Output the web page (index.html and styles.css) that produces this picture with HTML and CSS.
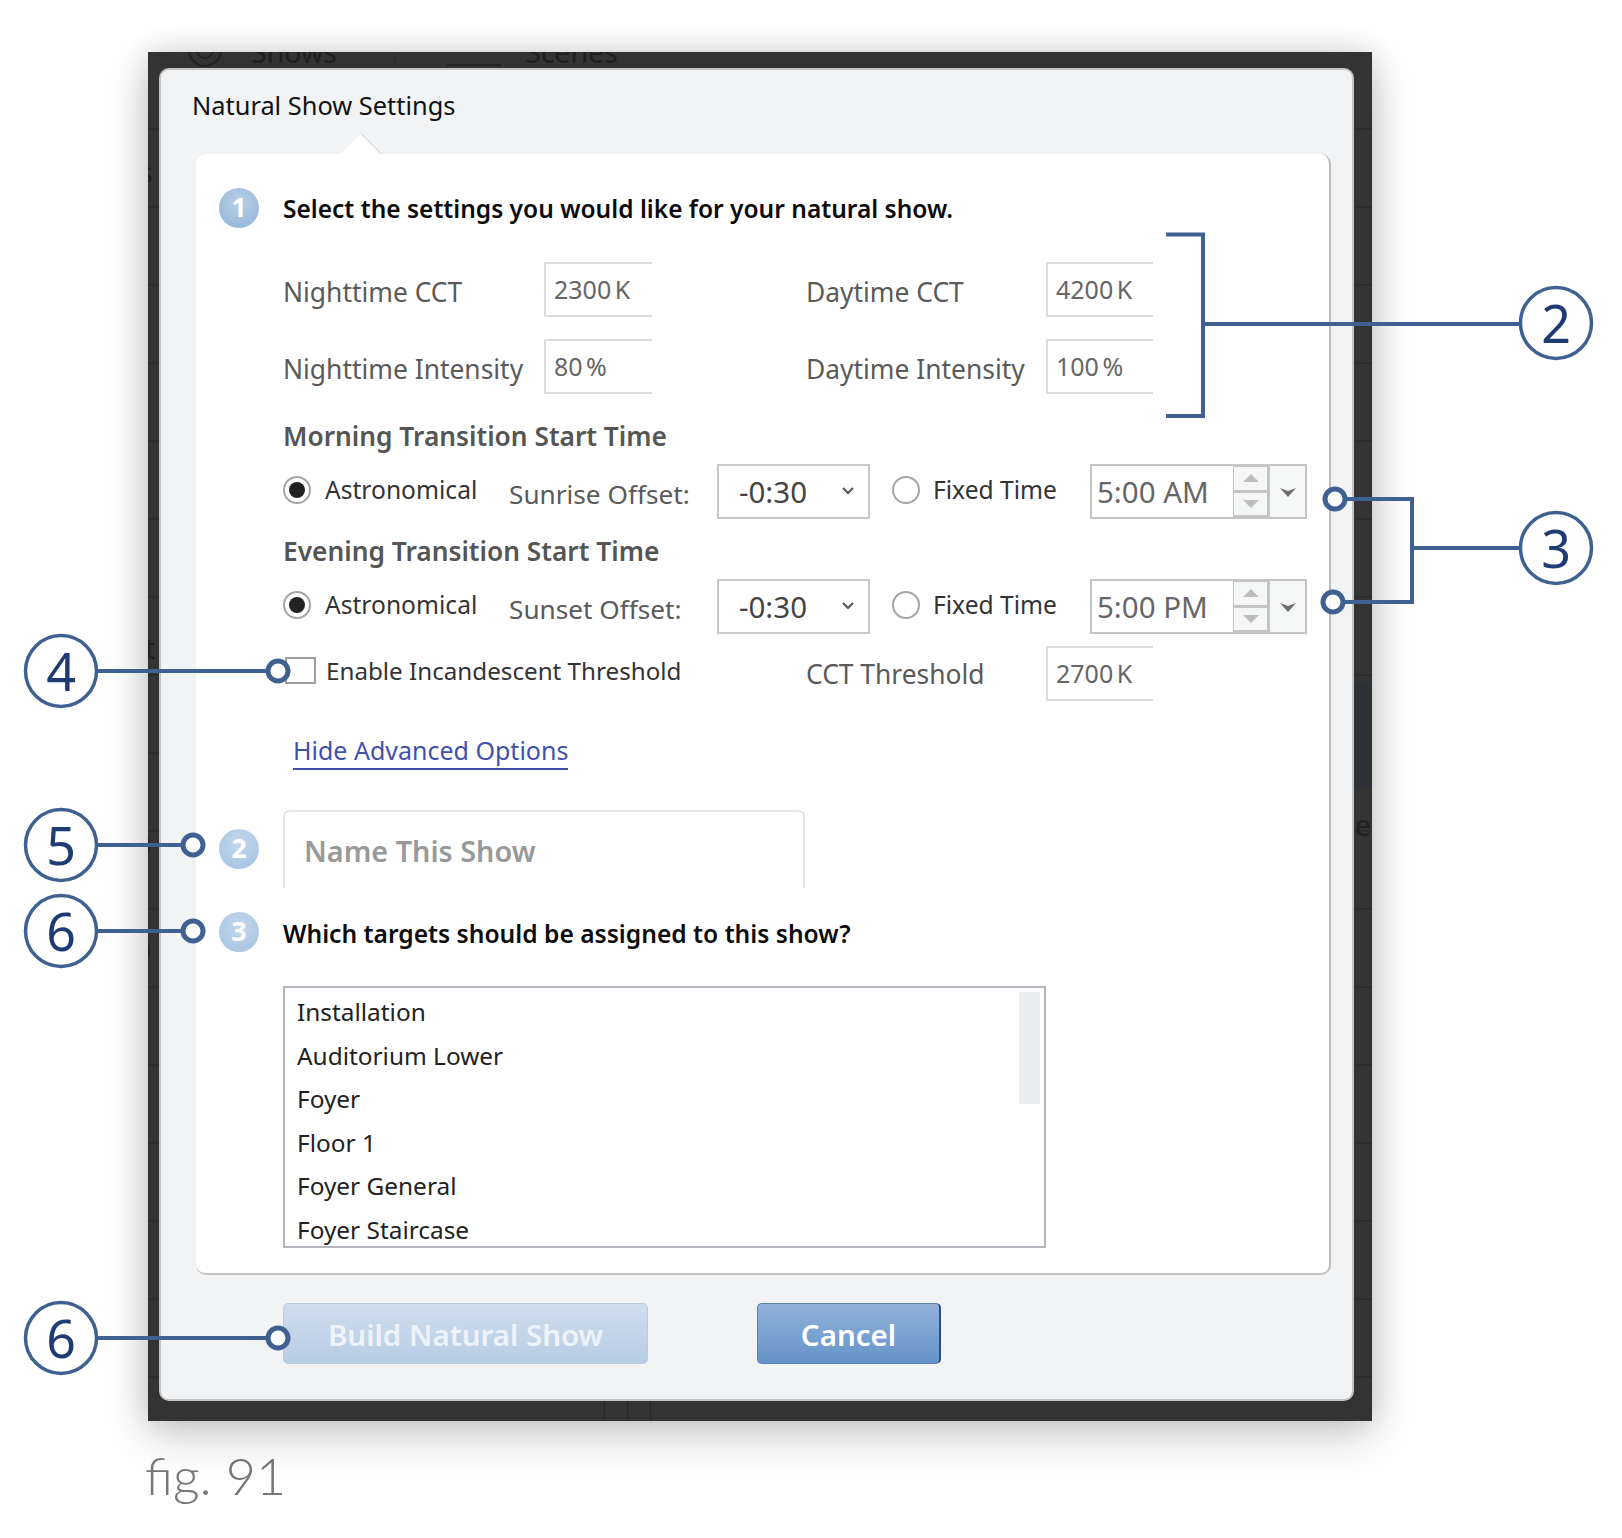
FILE: index.html
```html
<!DOCTYPE html>
<html lang="en">
<head>
<meta charset="utf-8">
<title>Natural Show Settings</title>
<link rel="stylesheet" href="styles.css">
</head>
<body>
<div class="page">
  <div class="frame">
    <div class="ghost">
      <svg class="ghost-icon" width="44" height="30" viewBox="0 0 44 30"><circle cx="22" cy="-2" r="16" fill="none" stroke="#222" stroke-width="2"/><circle cx="22" cy="-2" r="8" fill="none" stroke="#222" stroke-width="2"/></svg>
      <span class="ghost-text ghost-shows">Shows</span>
      <span class="ghost-text ghost-scenes">Scenes</span>
      <span class="ghost-sep"></span>
      <span class="ghost-dash"></span>
      <span class="ghost-band"></span>
      <span class="ghost-text ghost-s">s</span>
      <span class="ghost-text ghost-t">t</span>
      <span class="ghost-text ghost-o1">0</span>
      <span class="ghost-text ghost-o2">0</span>
      <span class="ghost-text ghost-e">e</span>
      <span class="ghost-v ghost-v1"></span>
      <span class="ghost-v ghost-v2"></span>
      <span class="ghost-v ghost-v3"></span>
    </div>
    <div class="dialog">
      <h1 class="dialog-title">Natural Show Settings</h1>
      <div class="panel">
        <span class="notch"></span>
        <div class="step step-first">
          <span class="badge">1</span>
          <h2 class="step-title">Select the settings you would like for your natural show.</h2>
        </div>
        <div class="body">
          <div class="fields">
            <span class="field-label">Nighttime CCT</span>
            <span class="num-input">2300 K</span>
            <span></span>
            <span class="field-label">Daytime CCT</span>
            <span class="num-input">4200 K</span>
            <span class="field-label">Nighttime Intensity</span>
            <span class="num-input">80 %</span>
            <span></span>
            <span class="field-label">Daytime Intensity</span>
            <span class="num-input">100 %</span>
          </div>

          <h3 class="sub-title sub-morning">Morning Transition Start Time</h3>
          <div class="time-row">
            <label class="radio-label"><span class="radio radio-on"></span>Astronomical</label>
            <span class="offset-label">Sunrise Offset:</span>
            <span class="select">-0:30
              <svg class="chev" width="14" height="10" viewBox="0 0 14 10"><path d="M2 2l5 5 5-5" fill="none" stroke="#555" stroke-width="2"/></svg>
            </span>
            <label class="radio-label radio-fixed"><span class="radio"></span>Fixed Time</label>
            <span class="spin">
              <span class="spin-value">5:00 AM</span>
              <span class="spin-btns">
                <span class="spin-btn"><svg width="18" height="10" viewBox="0 0 18 10"><path d="M1 9L9 1l8 8H1z" fill="#bdbdbd"/></svg></span>
                <span class="spin-btn"><svg width="18" height="10" viewBox="0 0 18 10"><path d="M1 1h16L9 9z" fill="#bdbdbd"/></svg></span>
              </span>
              <span class="spin-drop"><svg width="16" height="10" viewBox="0 0 16 10"><path d="M0 1l8 3 8-3-8 9z" fill="#6e6e6e"/></svg></span>
            </span>
          </div>

          <h3 class="sub-title sub-evening">Evening Transition Start Time</h3>
          <div class="time-row">
            <label class="radio-label"><span class="radio radio-on"></span>Astronomical</label>
            <span class="offset-label">Sunset Offset:</span>
            <span class="select">-0:30
              <svg class="chev" width="14" height="10" viewBox="0 0 14 10"><path d="M2 2l5 5 5-5" fill="none" stroke="#555" stroke-width="2"/></svg>
            </span>
            <label class="radio-label radio-fixed"><span class="radio"></span>Fixed Time</label>
            <span class="spin">
              <span class="spin-value">5:00 PM</span>
              <span class="spin-btns">
                <span class="spin-btn"><svg width="18" height="10" viewBox="0 0 18 10"><path d="M1 9L9 1l8 8H1z" fill="#bdbdbd"/></svg></span>
                <span class="spin-btn"><svg width="18" height="10" viewBox="0 0 18 10"><path d="M1 1h16L9 9z" fill="#bdbdbd"/></svg></span>
              </span>
              <span class="spin-drop"><svg width="16" height="10" viewBox="0 0 16 10"><path d="M0 1l8 3 8-3-8 9z" fill="#6e6e6e"/></svg></span>
            </span>
          </div>

          <div class="fields fields-threshold">
            <label class="check-label"><span class="check"></span>Enable Incandescent Threshold</label>
            <span class="field-label threshold-label">CCT Threshold</span>
            <span class="num-input">2700 K</span>
          </div>

          <a class="advanced" href="#">Hide Advanced Options</a>
        </div>

        <div class="step step-name">
          <span class="badge badge-light">2</span>
          <div class="name-input">Name This Show</div>
        </div>

        <div class="step step-targets">
          <span class="badge badge-light">3</span>
          <h2 class="step-title">Which targets should be assigned to this show?</h2>
        </div>

        <div class="body">
          <div class="listbox">
            <span class="thumb"></span>
            <div class="list-item">Installation</div>
            <div class="list-item">Auditorium Lower</div>
            <div class="list-item">Foyer</div>
            <div class="list-item">Floor 1</div>
            <div class="list-item">Foyer General</div>
            <div class="list-item">Foyer Staircase</div>
          </div>
        </div>
      </div>
      <div class="actions">
        <button class="btn btn-disabled" type="button">Build Natural Show</button>
        <button class="btn btn-primary" type="button">Cancel</button>
      </div>
    </div>
  </div>
  <p class="caption">fig. 91</p>

  <svg class="callouts" width="1622" height="1538" viewBox="0 0 1622 1538">
    <g class="lines">
      <path d="M1166 234.500H1203V416H1166M1203 324H1522"/>
      <path d="M1345 499H1412V602H1343M1412 548H1522"/>
      <path d="M96 671H268"/>
      <path d="M96 845H183"/>
      <path d="M96 931H183"/>
      <path d="M96 1338H268"/>
    </g>
    <g class="dots">
      <circle cx="1335" cy="499" r="10"/>
      <circle cx="1333" cy="602" r="10"/>
      <circle cx="278" cy="671" r="10"/>
      <circle cx="193" cy="845" r="10"/>
      <circle cx="193" cy="931" r="10"/>
      <circle cx="278" cy="1338" r="10"/>
    </g>
    <g class="rings">
      <circle cx="1556" cy="323" r="35.500"/>
      <circle cx="1556" cy="548" r="35.500"/>
      <circle cx="61" cy="671" r="35.500"/>
      <circle cx="61" cy="845" r="35.500"/>
      <circle cx="61" cy="931" r="35.500"/>
      <circle cx="61" cy="1338" r="35.500"/>
    </g>
    <g class="nums">
      <text x="1556" y="343">2</text>
      <text x="1556" y="568">3</text>
      <text x="61" y="691">4</text>
      <text x="61" y="865">5</text>
      <text x="61" y="951">6</text>
      <text x="61" y="1358">6</text>
    </g>
  </svg>
</div>
</body>
</html>
```

FILE: styles.css
```css
* { box-sizing: border-box; }
html, body { margin: 0; padding: 0; background: #fff; }
body { font-family: "Noto Sans", "Open Sans", sans-serif; color: #111; }
.page { position: relative; width: 1622px; height: 1538px; overflow: hidden; padding: 52px 0 0 148px; }

.frame {
  position: relative;
  width: 1224px;
  height: 1369px;
  padding: 16px 18px 20px 11px;
  background: repeating-linear-gradient(#333 0, #333 76px, #2c2c2c 76px, #2c2c2c 78px);
  box-shadow: 0 14px 46px rgba(0,0,0,.2), 0 0 26px rgba(0,0,0,.12);
}
.ghost { position: absolute; inset: 0; overflow: hidden; }
.ghost-text { position: absolute; font-size: 28.500px; line-height: 36px; color: #1f1f1f; }
.ghost-icon { position: absolute; left: 35px; top: 0; }
.ghost-shows { left: 103px; top: -18px; }
.ghost-scenes { left: 377px; top: -18px; }
.ghost-sep { position: absolute; left: 246px; top: 0; width: 1px; height: 16px; background: #2a2a2a; }
.ghost-dash { position: absolute; left: 299px; top: 12px; width: 54px; height: 2px; background: #222; }
.ghost-band { position: absolute; left: 1206px; top: 630px; width: 18px; height: 106px; background: #2d3136; }
.ghost-s { left: -9px; top: 102px; }
.ghost-t { left: -3px; top: 578px; }
.ghost-o1 { left: -13px; top: 775px; }
.ghost-o2 { left: -13px; top: 880px; }
.ghost-e { left: 1207px; top: 755px; }
.ghost-v { position: absolute; top: 1349px; width: 1px; height: 20px; background: #262626; }
.ghost-v1 { left: 456px; }
.ghost-v2 { left: 479px; }
.ghost-v3 { left: 502px; }

.dialog {
  position: relative;
  height: 1333px;
  padding: 17px 21px 0 35px;
  background: #f2f3f5;
  border: 2px solid #c4c4c4;
  border-radius: 10px;
}
.dialog-title { margin: 0 0 31px -4px; font-size: 25.400px; line-height: 36px; font-weight: 400; color: #111; }

.panel {
  position: relative;
  width: 1135px;
  height: 1121px;
  padding: 34px 0 0 23px;
  background: #fff;
  border-right: 2px solid #bdbdbd;
  border-bottom: 2px solid #c4c4c4;
  border-radius: 10px;
}
.notch {
  position: absolute;
  left: 150px;
  top: -15px;
  width: 30px;
  height: 30px;
  background: #fff;
  border-top: 1px solid #c8c8c8;
  transform: rotate(45deg);
  clip-path: polygon(0 0, 100% 0, 0 100%);
}

.step { display: flex; align-items: center; gap: 24px; }
.badge {
  flex: none;
  display: flex;
  align-items: center;
  justify-content: center;
  width: 40px;
  height: 40px;
  padding-bottom: 3px;
  border-radius: 50%;
  background: radial-gradient(circle at 50% 35%, #b9cfe6, #8fb3d8);
  color: #fff;
  font-size: 27px;
  font-weight: 700;
}
.badge-light { background: radial-gradient(circle at 50% 35%, #c3d7ec, #a3c2e2); }
.step-title { position: relative; top: 1px; margin: 0; font-size: 24.500px; line-height: 36px; font-weight: 600; color: #0c0c0c; }
.step-targets .step-title { top: 2px; font-size: 24.600px; }

.body { padding-left: 64px; }

.fields { display: grid; grid-template-columns: 261px 108px 154px 240px 107px; grid-auto-rows: 55px; row-gap: 22px; margin-top: 34px; align-items: center; }
.field-label { font-size: 26.400px; color: #5a5a5a; position: relative; top: 2px; }
.num-input {
  display: flex;
  align-items: center;
  height: 55px;
  padding: 0 0 2px 8px;
  font-size: 25px;
  word-spacing: -3px;
  color: #666;
  background: #fff;
  border: 2px solid #dcdcdc;
  border-right: none;
  border-radius: 2px 0 0 2px;
}
.fields-threshold { margin-top: 12px; }
.check-label { grid-column: 1 / span 3; display: flex; align-items: center; gap: 10px; padding-left: 2px; font-size: 24.200px; color: #333; position: relative; top: -3px; }
.check { flex: none; width: 31px; height: 27px; background: #fff; border: 2px solid #9e9e9e; }
.threshold-label { top: 0; }

.sub-title { margin: 0; height: 30px; font-size: 26.300px; line-height: 30px; font-weight: 600; color: #555; }
.sub-morning { margin-top: 27px; margin-bottom: 13px; }
.sub-evening { margin-top: 17px; margin-bottom: 13px; }

.time-row { display: grid; grid-template-columns: 227px 207px 153px 220px 217px; height: 55px; align-items: center; }
.radio-label { display: flex; align-items: center; gap: 14px; font-size: 24.600px; color: #333; position: relative; top: -2px; }
.radio-fixed { padding-left: 22px; gap: 13px; }
.radio { flex: none; position: relative; width: 28px; height: 28px; border: 2px solid #a5a5a5; border-radius: 50%; background: #fff; }
.radio-on::after { content: ""; position: absolute; left: 4px; top: 4px; width: 16px; height: 16px; border-radius: 50%; background: #222; }
.offset-label { font-size: 26.200px; color: #5a5a5a; position: relative; top: 2px; left: -1px; }
.select {
  position: relative;
  display: flex;
  align-items: center;
  height: 55px;
  padding-left: 20px;
  font-size: 29.500px;
  color: #444;
  background: #fff;
  border: 2px solid #c8c8c8;
}
.chev { position: absolute; right: 13px; top: 20px; }
.spin { display: flex; height: 55px; border: 2px solid #c4c4c4; background: #fff; }
.spin-value { flex: none; width: 141px; padding-left: 5px; font-size: 29.500px; line-height: 52px; color: #666; white-space: nowrap; }
.spin-btns { flex: none; display: flex; flex-direction: column; gap: 3px; width: 37px; padding: 1px 3px 2px 1px; background: #c4c4c4; }
.spin-btn { flex: 1; display: flex; align-items: center; justify-content: center; background: #f5f6f6; }
.spin-drop { flex: 1; display: flex; align-items: center; justify-content: center; background: #f5f6f6; }

.advanced {
  display: inline-block;
  margin: 34px 0 0 10px;
  height: 35px;
  font-size: 25px;
  line-height: 30px;
  color: #3f51ad;
  text-decoration: none;
  border-bottom: 2px solid #3f51ad;
}

.step-name { margin-top: 40px; }
.name-input {
  width: 522px;
  height: 78px;
  padding: 18px 0 0 19px;
  font-size: 28.800px;
  line-height: 42px;
  font-weight: 600;
  color: #999;
  background: #fff;
  border: 2px solid #e6e6e6;
  border-bottom: none;
  border-radius: 6px 6px 0 0;
}
.step-targets { margin-top: 24px; }

.listbox {
  position: relative;
  width: 763px;
  height: 262px;
  margin-top: 34px;
  padding: 2px 0 0 12px;
  overflow: hidden;
  background: #fff;
  border: 2px solid #b5b6bd;
}
.thumb { position: absolute; right: 4px; top: 4px; width: 21px; height: 112px; background: #ebecee; }
.list-item { height: 43.600px; font-size: 24.400px; line-height: 43.600px; color: #222; white-space: nowrap; }

.actions { display: flex; gap: 109px; margin: 28px 0 0 87px; }
.btn { height: 61px; border-radius: 5px; font-family: inherit; font-size: 29.500px; font-weight: 600; color: #fff; padding: 2px 0 0; }
.btn-disabled { width: 365px; border: 1px solid #bccbdf; background: linear-gradient(#cfdeee, #b8cce4); color: #eef3f9; }
.btn-primary { width: 184px; border: 1px solid #5d7fb3; border-right: 2px solid #2e4a80; background: linear-gradient(#92b2da, #6593c8); }

.caption { margin: 24px 0 0 -3px; font-family: Lato, "Noto Sans", sans-serif; font-size: 52px; line-height: 60px; font-weight: 300; color: #777; }

.callouts { position: absolute; left: 0; top: 0; pointer-events: none; }
.lines path { fill: none; stroke: #3f6191; stroke-width: 4; }
.dots circle { fill: #fff; fill-opacity: .85; stroke: #3f6191; stroke-width: 5; }
.rings circle { fill: #fff; stroke: #3f6191; stroke-width: 3.500; }
.nums text { font-family: "Noto Sans", sans-serif; font-size: 52px; fill: #1f3b73; text-anchor: middle; }
```
